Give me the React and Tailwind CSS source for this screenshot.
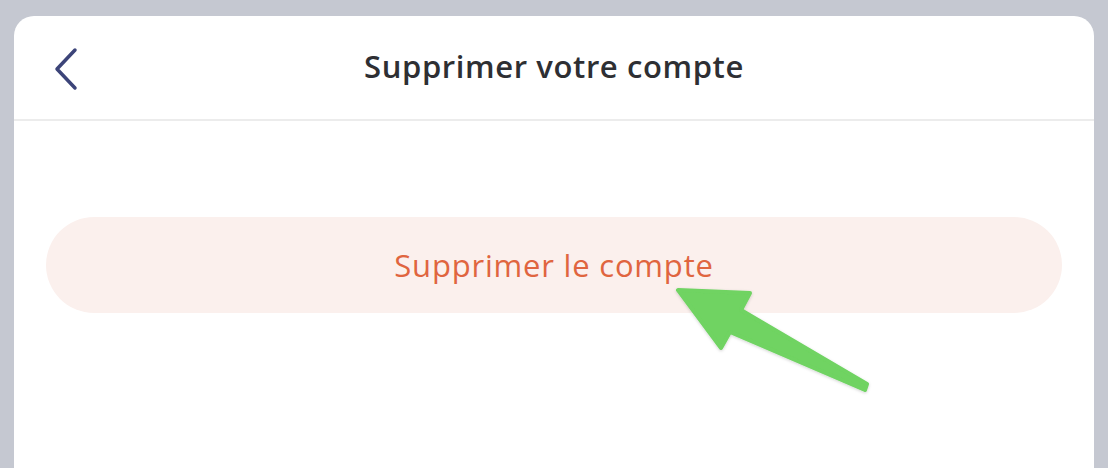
export default function App() {
  return (
    <div className="relative w-[1108px] h-[468px] overflow-hidden bg-[#c5c8d1] pt-4 px-[14px]" style={{ fontFamily: "'Open Sans', 'Noto Sans', sans-serif" }}>
      <div className="bg-white rounded-t-[20px] h-full">
        <div className="relative h-[105px] border-b-2 border-[#ececec] flex items-center justify-center">
          <button className="absolute left-[40px] top-[31px] w-[26px] h-[44px] flex items-center justify-center">
            <svg width="26" height="44" viewBox="0 0 26 44" fill="none">
              <path d="M21 3 L3 22 L21 41" stroke="#3c4479" strokeWidth="3.5" strokeLinecap="round" strokeLinejoin="round" />
            </svg>
          </button>
          <h1 className="text-[31px] font-semibold text-[#2e2f33] tracking-[0.6px] -mt-[2px]">Supprimer votre compte</h1>
        </div>
        <div className="px-[32px] pt-[96px]">
          <div className="h-[96px] rounded-full bg-[#fbf0ed] flex items-center justify-center">
            <span className="text-[31px] font-medium text-[#e0653f] tracking-[0.8px]">Supprimer le compte</span>
          </div>
        </div>
      </div>
      <svg className="absolute left-0 top-0 pointer-events-none" width="1108" height="468" viewBox="0 0 1108 468">
        <defs>
          <filter id="sh" x="-20%" y="-20%" width="140%" height="140%">
            <feDropShadow dx="0" dy="1" stdDeviation="1.5" floodColor="#000" floodOpacity="0.18" />
          </filter>
        </defs>
        <path
          d="M678 290 L750 293 L741 310 L867 384 L865 390 L730 332 L721 348 Z"
          fill="#6fd362"
          stroke="#6fd362"
          strokeWidth="4"
          strokeLinejoin="round"
          filter="url(#sh)"
        />
      </svg>
    </div>
  );
}
